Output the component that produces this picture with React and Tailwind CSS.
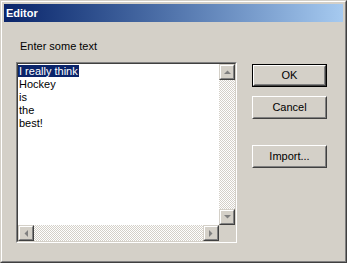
const font = { fontFamily: '"Liberation Sans", Arial, sans-serif' }

function Raised({ className = '', children }) {
  return (
    <div className={`border border-t-[#d4d0c8] border-l-[#d4d0c8] border-b-[#404040] border-r-[#404040] ${className}`}>
      <div className="w-full h-full border border-t-white border-l-white border-b-[#808080] border-r-[#808080] bg-[#d4d0c8] flex items-center justify-center">
        {children}
      </div>
    </div>
  )
}

function Arrow({ dir }) {
  const pts = {
    up: '0,4 7,4 3.5,0.5',
    down: '0,0 7,0 3.5,3.5',
    left: '4,0 4,7 0.5,3.5',
    right: '0,0 0,7 3.5,3.5',
  }[dir]
  const vert = dir === 'up' || dir === 'down'
  return (
    <svg width={vert ? 7 : 4} height={vert ? 4 : 7} viewBox={vert ? '0 0 7 4' : '0 0 4 7'}>
      <polygon points={pts} fill="#808080" />
    </svg>
  )
}

function Button({ label, isDefault }) {
  const inner = (
    <div className="w-full h-full border border-t-white border-l-white border-b-[#404040] border-r-[#404040]">
      <div className="w-full h-full border border-t-[#d4d0c8] border-l-[#d4d0c8] border-b-[#808080] border-r-[#808080] flex items-center justify-center text-[11px] text-black">
        {label}
      </div>
    </div>
  )
  if (isDefault) {
    return <div className="w-[75px] h-[23px] border border-black">{inner}</div>
  }
  return <div className="w-[75px] h-[23px]">{inner}</div>
}

export default function App() {
  const lines = ['Hockey', 'is', 'the', 'best!']

  return (
    <div style={font} className="w-[347px] h-[263px] bg-[#d4d0c8] border border-t-[#d4d0c8] border-l-[#d4d0c8] border-b-[#404040] border-r-[#404040]">
      <div className="w-full h-full border border-t-white border-l-white border-b-[#808080] border-r-[#808080] p-[2px] flex flex-col">
        <div className="h-[18px] bg-gradient-to-r from-[#0a246a] to-[#a6caf0] flex items-center pl-[2px]">
          <span className="text-white font-bold text-[11px]">Editor</span>
        </div>

        <div className="flex flex-1">
          <div className="ml-[12px] flex flex-col">
            <div className="mt-[18px] pl-[4px] text-[11px] leading-[13px] text-black">Enter some text</div>
            <div className="mt-[9px] w-[221px] h-[181px] border border-t-[#808080] border-l-[#808080] border-b-white border-r-white">
              <div className="w-full h-full border border-t-[#404040] border-l-[#404040] border-b-[#d4d0c8] border-r-[#d4d0c8] bg-white flex flex-col">
                <div className="flex flex-1">
                  <div className="flex-1 pt-[1px] text-[11px] leading-[13px] text-black">
                    <div>
                      <span className="bg-[#0a246a] text-white pl-[1px] pr-[1px]">I really think</span>
                    </div>
                    {lines.map((l) => (
                      <div key={l} className="pl-[1px]">{l}</div>
                    ))}
                  </div>
                  <div className="w-[16px] flex flex-col bg-[image:repeating-conic-gradient(#d4d0c8_0_25%,#ffffff_0_50%)] bg-[length:2px_2px]">
                    <Raised className="w-[16px] h-[16px]"><Arrow dir="up" /></Raised>
                    <div className="flex-1" />
                    <Raised className="w-[16px] h-[16px]"><Arrow dir="down" /></Raised>
                  </div>
                </div>
                <div className="flex h-[16px]">
                  <div className="flex flex-1 bg-[image:repeating-conic-gradient(#d4d0c8_0_25%,#ffffff_0_50%)] bg-[length:2px_2px]">
                    <Raised className="w-[16px] h-[16px]"><Arrow dir="left" /></Raised>
                    <div className="flex-1" />
                    <Raised className="w-[16px] h-[16px]"><Arrow dir="right" /></Raised>
                  </div>
                  <div className="w-[16px] h-[16px] bg-[#d4d0c8]" />
                </div>
              </div>
            </div>
          </div>

          <div className="ml-[15px] mt-[42px] flex flex-col">
            <Button label="OK" isDefault />
            <div className="mt-[9px]"><Button label="Cancel" /></div>
            <div className="mt-[26px]"><Button label="Import..." /></div>
          </div>
        </div>
      </div>
    </div>
  )
}
